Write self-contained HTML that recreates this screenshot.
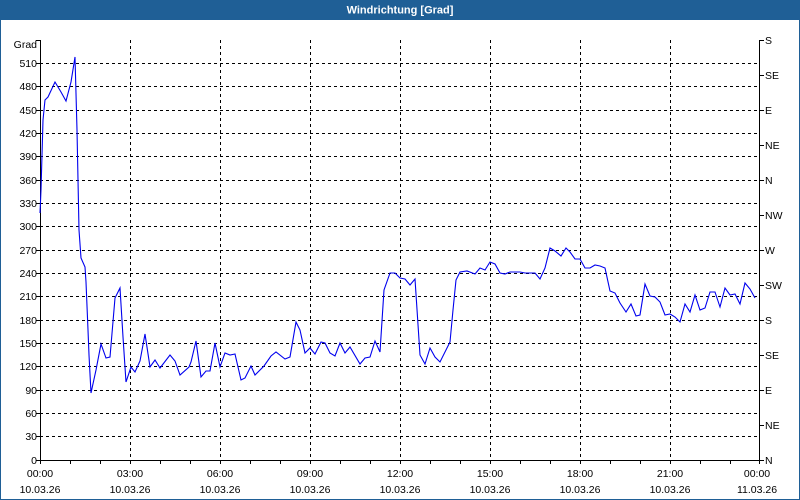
<!DOCTYPE html>
<html><head><meta charset="utf-8"><style>
html,body{margin:0;padding:0;width:800px;height:500px;overflow:hidden;background:#fff;font-family:"Liberation Sans",sans-serif;}
</style></head><body>
<svg width="800" height="500" xmlns="http://www.w3.org/2000/svg" font-family="Liberation Sans, sans-serif" font-size="10.5">
<rect x="0" y="0" width="800" height="500" fill="#fff"/>
<rect x="0.5" y="0.5" width="799" height="499" fill="none" stroke="#1f5f96"/>
<rect x="0" y="0" width="800" height="20" fill="#1f5f96"/>
<text x="400" y="13.5" fill="#fff" font-weight="bold" font-size="11" text-anchor="middle">Windrichtung [Grad]</text>
<g stroke="#000" stroke-dasharray="3,3" stroke-width="1">
<line x1="130.5" y1="40" x2="130.5" y2="460"/><line x1="220.5" y1="40" x2="220.5" y2="460"/>
<line x1="310.5" y1="40" x2="310.5" y2="460"/><line x1="400.5" y1="40" x2="400.5" y2="460"/>
<line x1="490.5" y1="40" x2="490.5" y2="460"/><line x1="580.5" y1="40" x2="580.5" y2="460"/>
<line x1="670.5" y1="40" x2="670.5" y2="460"/>
<line x1="40" y1="63.5" x2="760" y2="63.5"/><line x1="40" y1="86.5" x2="760" y2="86.5"/>
<line x1="40" y1="110.5" x2="760" y2="110.5"/><line x1="40" y1="133.5" x2="760" y2="133.5"/>
<line x1="40" y1="156.5" x2="760" y2="156.5"/><line x1="40" y1="180.5" x2="760" y2="180.5"/>
<line x1="40" y1="203.5" x2="760" y2="203.5"/><line x1="40" y1="226.5" x2="760" y2="226.5"/>
<line x1="40" y1="250.5" x2="760" y2="250.5"/><line x1="40" y1="273.5" x2="760" y2="273.5"/>
<line x1="40" y1="296.5" x2="760" y2="296.5"/><line x1="40" y1="320.5" x2="760" y2="320.5"/>
<line x1="40" y1="343.5" x2="760" y2="343.5"/><line x1="40" y1="366.5" x2="760" y2="366.5"/>
<line x1="40" y1="390.5" x2="760" y2="390.5"/><line x1="40" y1="413.5" x2="760" y2="413.5"/>
<line x1="40" y1="436.5" x2="760" y2="436.5"/>
</g>
<g stroke="#000" stroke-width="1" fill="none">
<line x1="40.5" y1="40" x2="40.5" y2="461"/>
<line x1="759.5" y1="40" x2="759.5" y2="461"/>
<line x1="40" y1="460.5" x2="760" y2="460.5"/>
<path d="M36 40.5h4M36 63.5h4M36 86.5h4M36 110.5h4M36 133.5h4M36 156.5h4M36 180.5h4M36 203.5h4M36 226.5h4M36 250.5h4M36 273.5h4M36 296.5h4M36 320.5h4M36 343.5h4M36 366.5h4M36 390.5h4M36 413.5h4M36 436.5h4M36 460.5h4"/>
<path d="M760 40.5h4M760 75.5h4M760 110.5h4M760 145.5h4M760 180.5h4M760 215.5h4M760 250.5h4M760 285.5h4M760 320.5h4M760 355.5h4M760 390.5h4M760 425.5h4M760 460.5h4"/>
<path d="M40.5 460v4M70.5 460v4M100.5 460v4M130.5 460v4M160.5 460v4M190.5 460v4M220.5 460v4M250.5 460v4M280.5 460v4M310.5 460v4M340.5 460v4M370.5 460v4M400.5 460v4M430.5 460v4M460.5 460v4M490.5 460v4M520.5 460v4M550.5 460v4M580.5 460v4M610.5 460v4M640.5 460v4M670.5 460v4M700.5 460v4M730.5 460v4M759.5 460v4"/>
</g>
<g fill="#000" text-anchor="end">
<text x="37" y="48">Grad</text>
<text x="37" y="67">510</text><text x="37" y="90">480</text><text x="37" y="114">450</text>
<text x="37" y="137">420</text><text x="37" y="160">390</text><text x="37" y="184">360</text>
<text x="37" y="207">330</text><text x="37" y="230">300</text><text x="37" y="254">270</text>
<text x="37" y="277">240</text><text x="37" y="300">210</text><text x="37" y="324">180</text>
<text x="37" y="347">150</text><text x="37" y="370">120</text><text x="37" y="394">90</text>
<text x="37" y="417">60</text><text x="37" y="440">30</text><text x="37" y="464">0</text>
</g>
<g fill="#000">
<text x="765" y="44">S</text><text x="765" y="79">SE</text><text x="765" y="114">E</text>
<text x="765" y="149">NE</text><text x="765" y="184">N</text><text x="765" y="219">NW</text>
<text x="765" y="254">W</text><text x="765" y="289">SW</text><text x="765" y="324">S</text>
<text x="765" y="359">SE</text><text x="765" y="394">E</text><text x="765" y="429">NE</text>
<text x="765" y="464">N</text>
</g>
<g fill="#000" text-anchor="middle">
<text x="40" y="477">00:00</text><text x="40" y="493">10.03.26</text>
<text x="130" y="477">03:00</text><text x="130" y="493">10.03.26</text>
<text x="220" y="477">06:00</text><text x="220" y="493">10.03.26</text>
<text x="310" y="477">09:00</text><text x="310" y="493">10.03.26</text>
<text x="400" y="477">12:00</text><text x="400" y="493">10.03.26</text>
<text x="490" y="477">15:00</text><text x="490" y="493">10.03.26</text>
<text x="580" y="477">18:00</text><text x="580" y="493">10.03.26</text>
<text x="670" y="477">21:00</text><text x="670" y="493">10.03.26</text>
<text x="757" y="477">00:00</text><text x="757" y="493">11.03.26</text>
</g>
<polyline fill="none" stroke="#0000ee" stroke-width="1.1" points="40,213 41,190 43,120 45,100 48,97 55,82 61,92 66,101 71,82 75,57 77,130 79,230 81,258 85,267 86,282 88,330 89,355 91,393 96,370 101,344 106,358 110,357 115,298 120,288 123,337 126,382 131,367 135,372 140,361 145,334 150,367 155,360 160,368 170,355 175,361 180,375 189,367 191,362 196,341 201,377 206,371 210,371 215,343 220,367 225,353 230,355 235,354 241,380 245,378 251,366 255,375 264,366 271,356 276,352 285,359 290,357 296,322 300,330 305,353 310,348 315,354 321,342 325,343 330,353 335,356 340,343 345,353 350,347 360,364 365,358 370,357 375,341 380,352 384,290 390,273 395,273 400,278 405,279 410,285 415,279 420,355 425,364 430,348 435,357 440,362 450,342 453,310 456,280 460,272 467,271 475,274 480,268 485,270 490,262 495,264 500,273 505,274 510,272 520,272 525,273 535,273 540,279 545,268 550,248 555,251 561,256 566,248 570,252 575,259 580,259 585,268 590,268 595,265 600,266 605,268 610,291 615,293 620,303 626,312 631,304 636,316 640,315 645,284 650,296 655,297 660,302 665,315 670,314 675,317 680,322 685,304 690,312 695,295 700,310 705,308 710,292 715,292 720,307 725,288 730,295 735,294 740,304 745,283 750,289 755,298"/>
</svg>
</body></html>
